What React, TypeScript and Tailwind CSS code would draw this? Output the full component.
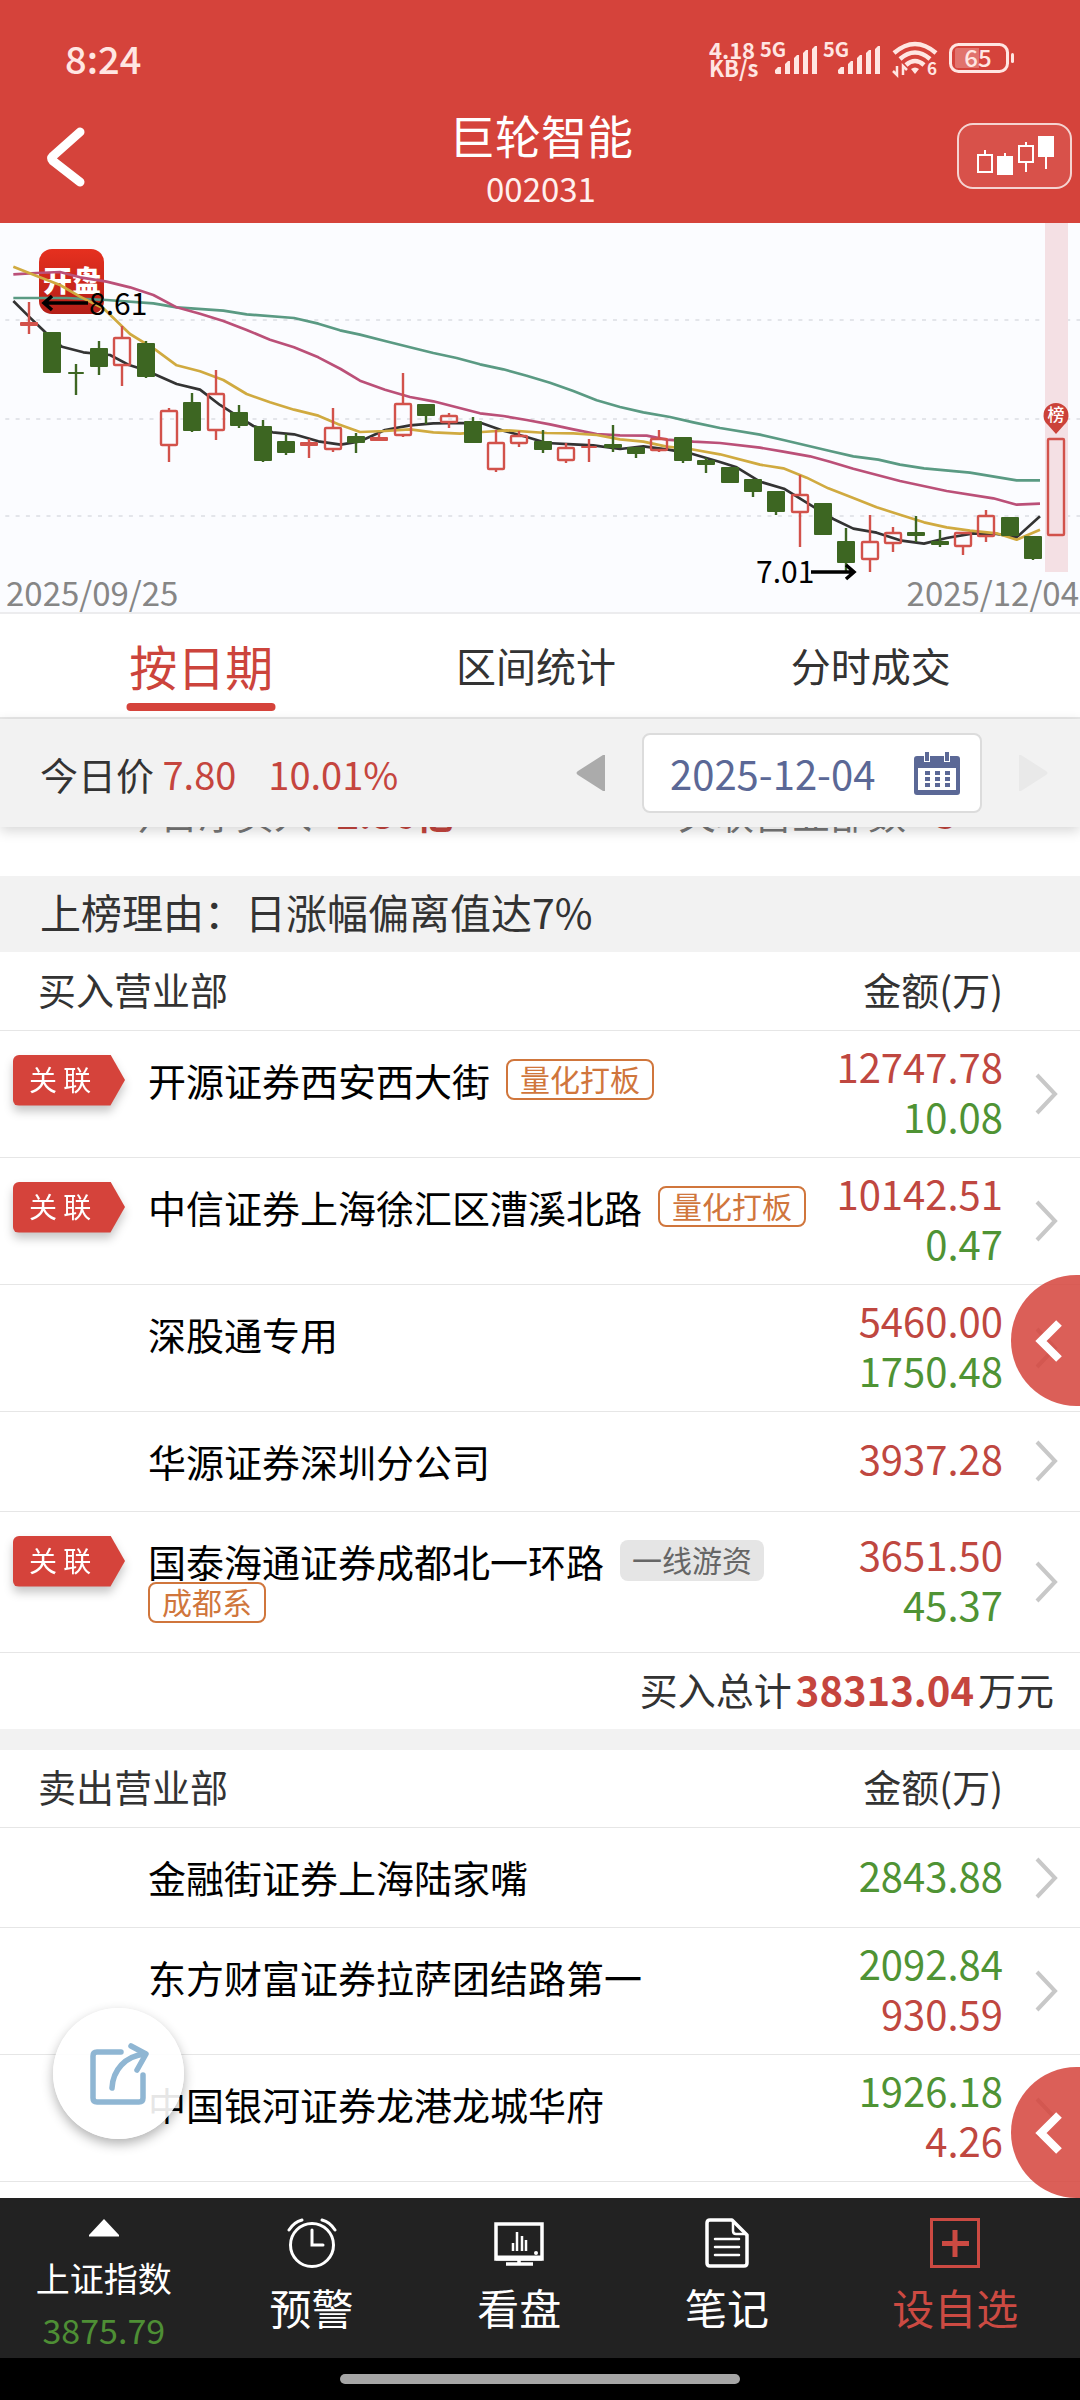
import type { ReactNode } from "react";

type Candle = {
  up: boolean;
  high: number;
  top: number;
  bottom: number;
  low: number;
};

type Tag = { label: string; tone: "orange" | "gray" };

type Seat = {
  name: string;
  linked?: boolean;
  tags?: Tag[];
  amount: string;
  counter?: string;
};

const c = (
  up: boolean,
  high: number,
  top: number,
  bottom: number,
  low: number
): Candle => ({ up, high, top, bottom, low });

const candles: Candle[] = [
  c(true, 79, 99, 103, 111),
  c(false, 109, 109, 150, 150),
  c(false, 141, 149, 151, 172),
  c(false, 118, 125, 144, 152),
  c(true, 103, 114, 143, 163),
  c(false, 118, 120, 154, 155),
  c(true, 185, 187, 223, 239),
  c(false, 170, 179, 208, 209),
  c(true, 147, 170, 208, 217),
  c(false, 182, 189, 203, 205),
  c(false, 197, 203, 238, 239),
  c(false, 211, 218, 230, 232),
  c(true, 216, 219, 223, 235),
  c(true, 185, 204, 227, 229),
  c(false, 210, 213, 220, 230),
  c(true, 210, 214, 218, 218),
  c(true, 150, 180, 213, 214),
  c(false, 181, 181, 193, 201),
  c(true, 190, 192, 200, 205),
  c(false, 194, 198, 220, 220),
  c(true, 207, 219, 247, 249),
  c(true, 208, 212, 221, 224),
  c(false, 207, 218, 227, 230),
  c(true, 220, 224, 238, 240),
  c(true, 216, 223, 225, 239),
  c(false, 202, 221, 225, 229),
  c(false, 224, 224, 231, 235),
  c(true, 207, 215, 228, 229),
  c(false, 214, 214, 238, 240),
  c(false, 235, 237, 242, 250),
  c(false, 244, 244, 260, 260),
  c(false, 256, 256, 269, 274),
  c(false, 268, 268, 289, 292),
  c(true, 252, 271, 290, 324),
  c(false, 280, 280, 312, 312),
  c(false, 305, 318, 340, 349),
  c(true, 292, 318, 337, 349),
  c(true, 304, 309, 321, 329),
  c(false, 293, 309, 313, 319),
  c(false, 307, 318, 322, 324),
  c(true, 309, 309, 324, 332),
  c(true, 287, 292, 314, 319),
  c(false, 294, 294, 313, 313),
  c(false, 313, 313, 336, 337),
  c(true, 215, 215, 313, 313),
];

// Moving averages, stored at three units per chart pixel
const averages = [
  {
    color: "#5a9a83",
    points:
      "40,234 200,234 320,240 460,250 530,262 670,272 740,283 882,294 955,311 1020,331 1080,344 1155,363 1230,382 1300,399 1370,414 1440,433 1510,448 1580,467 1650,488 1720,513 1790,541 1860,561 1930,577 2010,591 2080,607 2160,624 2280,644 2350,660 2490,693 2560,709 2635,719 2700,734 2772,745 2910,758 3050,781 3120,781",
  },
  {
    color: "#bb5078",
    points:
      "40,163 110,159 180,156 240,172 320,185 390,202 460,225 530,262 600,281 670,303 740,330 810,359 882,382 955,412 1022,447 1080,482 1155,509 1230,531 1300,544 1370,562 1440,580 1510,588 1580,600 1650,613 1720,628 1790,642 1860,646 1940,647 2000,659 2080,665 2160,669 2280,683 2350,695 2430,709 2490,725 2560,746 2700,783 2840,813 2980,835 3050,854 3120,851",
  },
  {
    color: "#333333",
    points:
      "40,243 87,290 136,337 186,380 250,397 297,402 330,405 385,434 435,450 530,492 600,509 660,555 715,590 760,618 818,637 882,643 955,664 1022,674 1080,664 1155,630 1230,616 1300,610 1380,609 1446,610 1510,632 1580,651 1640,669 1720,673 1780,676 1860,687 1930,679 2005,689 2070,700 2160,726 2210,742 2280,785 2352,806 2420,848 2500,897 2560,926 2630,938 2705,962 2772,971 2840,954 2920,940 2990,942 3050,952 3120,889",
  },
  {
    color: "#d0aa40",
    points:
      "40,140 110,168 180,195 240,230 310,265 390,342 465,388 530,436 600,454 670,480 740,522 810,547 882,569 955,587 1015,613 1080,636 1155,633 1230,628 1300,637 1380,641 1446,636 1520,631 1640,639 1720,640 1790,645 1860,658 1930,665 2000,680 2070,687 2160,703 2280,734 2350,745 2420,773 2485,805 2560,834 2630,862 2700,884 2772,907 2840,922 2910,932 2990,940 3050,959 3120,929",
  },
];

const quant: Tag = { label: "量化打板", tone: "orange" };

const buySeats: Seat[] = [
  { name: "开源证券西安西大街", linked: true, tags: [quant], amount: "12747.78", counter: "10.08" },
  { name: "中信证券上海徐汇区漕溪北路", linked: true, tags: [quant], amount: "10142.51", counter: "0.47" },
  { name: "深股通专用", amount: "5460.00", counter: "1750.48" },
  { name: "华源证券深圳分公司", amount: "3937.28" },
  {
    name: "国泰海通证券成都北一环路",
    linked: true,
    tags: [
      { label: "一线游资", tone: "gray" },
      { label: "成都系", tone: "orange" },
    ],
    amount: "3651.50",
    counter: "45.37",
  },
];

const sellSeats: Seat[] = [
  { name: "金融街证券上海陆家嘴", amount: "2843.88" },
  { name: "东方财富证券拉萨团结路第一", amount: "2092.84", counter: "930.59" },
  { name: "中国银河证券龙港龙城华府", amount: "1926.18", counter: "4.26" },
];

function StatusBar() {
  return (
    <div className="flex h-[115px] items-center justify-between px-[65px] text-[#ffe6e2]">
      <span className="text-[38px] leading-none font-medium">8:24</span>
      <div className="flex items-center">
        <div className="w-[51px] text-[22px] leading-[18px] font-bold">
          <div>4.18</div>
          <div>KB/s</div>
        </div>
        <SignalIcon />
        <SignalIcon />
        <WifiIcon />
        <BatteryIcon />
      </div>
    </div>
  );
}

function Header() {
  return (
    <header className="bg-[#d5433b] text-white">
      <StatusBar />
      <div className="grid h-[108px] grid-cols-[1fr_auto_1fr] items-start pr-2 pl-[42px]">
        <button type="button" aria-label="返回" className="mt-2 justify-self-start">
          <svg width="48" height="66" viewBox="0 0 48 66" fill="none" stroke="currentColor" strokeWidth="9" strokeLinecap="round" strokeLinejoin="round">
            <path d="M38 9 11 33c-2 2-2 3 0 5l27 21" />
          </svg>
        </button>
        <div className="pr-8 text-center">
          <h1 className="text-[46px] leading-[38px]">巨轮智能</h1>
          <p className="mt-4 text-[33px] leading-[38px] text-[#fff0ee]">002031</p>
        </div>
        <button
          type="button"
          aria-label="K线"
          className="mt-2 flex h-[66px] w-[115px] items-center justify-center justify-self-end rounded-2xl border-2 border-white/75 bg-white/8"
        >
          <CandlesIcon />
        </button>
      </div>
    </header>
  );
}

function CandleShape({ candle, index }: { candle: Candle; index: number }) {
  const x = Math.round(29 + index * 23.35);
  const color = candle.up ? "#d2524b" : "#3d6622";
  const height = candle.bottom - candle.top;
  const hollow = candle.up && height > 5;
  const half = height === 2 ? 8 : 9;

  return (
    <g stroke={color} strokeWidth="2.4">
      <line x1={x} x2={x} y1={candle.high} y2={candle.top} />
      <line x1={x} x2={x} y1={candle.bottom} y2={candle.low} />
      {hollow ? (
        <rect x={x - 8} y={candle.top + 1} width="16" height={height - 2} rx="1" fill="none" />
      ) : (
        <rect x={x - half} y={candle.top} width={half * 2} height={height} rx="1" fill={color} stroke="none" />
      )}
    </g>
  );
}

function KLineChart() {
  return (
    <div className="border-b-2 border-[#ececee] bg-[#fbfcff]">
      <svg viewBox="0 0 1080 389" className="block w-full" role="img" aria-label="K线图">
        <defs>
          <linearGradient id="logo" x1="0" y1="0" x2="0" y2="1">
            <stop offset="0" stopColor="#e6301f" />
            <stop offset="1" stopColor="#b41f18" />
          </linearGradient>
        </defs>
        {[97, 196, 293].map((y) => (
          <line key={y} x1="-5" x2="1080" y1={y} y2={y} stroke="#dcdde3" strokeWidth="1.5" strokeDasharray="4 6.3" />
        ))}
        <rect x="1045" y="0" width="23" height="349" fill="#f4e0e4" />
        <rect x="39" y="26" width="65" height="65" rx="13" fill="url(#logo)" />
        <text x="72" y="69" textAnchor="middle" fontSize="29" fontWeight="900" fill="#fff">开盘</text>
        <g transform="translate(0 -3) scale(0.33333)">
          {averages.map((line) => (
            <polyline key={line.color} points={line.points} fill="none" stroke={line.color} strokeWidth="8" strokeLinejoin="round" />
          ))}
        </g>
        {candles.map((candle, i) => (
          <CandleShape key={i} candle={candle} index={i} />
        ))}
        <path d="M1056 211 L1048 202 A12.5 12.5 0 1 1 1064 202 Z" fill="#cb4239" />
        <text x="1056" y="198" textAnchor="middle" fontSize="17" fontWeight="500" fill="#fff">榜</text>
        <g fill="none" stroke="#000" strokeWidth="3.5">
          <path d="M44 80H88M52 73 44 80 52 87" />
          <path d="M811 349H853M846 342 854 349 846 356" />
        </g>
        <text x="89" y="92" fontSize="30">8.61</text>
        <text x="756" y="360" fontSize="30">7.01</text>
        <text x="6" y="383" fontSize="33" fill="#868686">2025/09/25</text>
        <text x="1079" y="383" textAnchor="end" fontSize="33" fill="#868686">2025/12/04</text>
      </svg>
    </div>
  );
}

function Tabs() {
  return (
    <nav className="grid h-[105px] grid-cols-3 border-b-2 border-[#e8e8e8] bg-white pr-[42px] pb-[2px] pl-[34px] text-[40px] text-[#333]">
      <button type="button" className="relative text-[48px] text-[#cc443c]">
        按日期
        <span className="absolute bottom-[4px] left-1/2 h-2 w-[149px] -translate-x-1/2 rounded-full bg-[#d5433b]" />
      </button>
      <button type="button">区间统计</button>
      <button type="button">分时成交</button>
    </nav>
  );
}

function DateBar() {
  return (
    <div className="relative z-10 flex h-[108px] items-center bg-[#f2f2f2] pr-8 pl-10 text-[38px] text-[#333] shadow-[0_4px_12px_rgba(0,0,0,0.16)]">
      <p>
        今日价 <span className="mr-8 text-[#c5453e]">7.80</span>
        <span className="text-[#c5453e]">10.01%</span>
      </p>
      <button type="button" aria-label="前一天" className="mr-9 ml-auto">
        <svg width="30" height="36" viewBox="0 0 30 36" fill="#ababab">
          <path d="M29 0v36h-2L2 20q-3-2 0-4L27 0z" />
        </svg>
      </button>
      <label className="flex h-20 w-[340px] items-center justify-between rounded-lg border-2 border-[#dcdcdc] bg-white pr-5 pl-[26px]">
        <input
          type="text"
          aria-label="日期"
          readOnly
          value="2025-12-04"
          className="w-[220px] bg-transparent text-[40px] leading-none text-[#5b6896] outline-none"
        />
        <CalendarIcon />
      </label>
      <button type="button" aria-label="后一天" className="ml-9">
        <svg width="30" height="36" viewBox="0 0 30 36" fill="#e9e9e9">
          <path d="M1 0v36h2l25-16q3-2 0-4L3 0z" />
        </svg>
      </button>
    </div>
  );
}

// Only the feet of this row show under the date bar while the list is scrolled
function ScrolledSummary() {
  return (
    <div className="grid h-[49px] grid-cols-2 content-end overflow-hidden bg-white pb-11 text-[38px] leading-[38px] text-[#777]">
      <p className="pl-[122px]">
        今日净买入 <b className="ml-4 text-[#c5453e]">2.86亿</b>
      </p>
      <p className="pl-[138px]">
        关联营业部数 <b className="ml-5 text-[#c5453e]">3</b>
      </p>
    </div>
  );
}

function LinkedBadge() {
  return (
    <span className="ml-[13px] block w-28 drop-shadow-[0_6px_5px_rgba(0,0,0,0.22)]">
      <span className="block h-[51px] rounded-l-md bg-[#d5433b] pl-4 text-[28px] leading-[49px] whitespace-pre text-white [clip-path:polygon(0_0,87%_0,100%_50%,87%_100%,0_100%)]">
        关 联
      </span>
    </span>
  );
}

function SeatTag({ tag }: { tag: Tag }) {
  if (tag.tone === "gray") {
    return (
      <span className="h-[41px] rounded-lg bg-[#e5e5e5] px-3 text-[30px] leading-[39px] text-[#666]">
        {tag.label}
      </span>
    );
  }
  return (
    <span className="h-[41px] rounded-lg border-2 border-[#d0763c] px-3 text-[30px] leading-[35px] text-[#d0763c]">
      {tag.label}
    </span>
  );
}

function SeatTable({
  title,
  seats,
  side,
}: {
  title: string;
  seats: Seat[];
  side: "buy" | "sell";
}) {
  const main = side === "buy" ? "text-[#bf4740]" : "text-[#4f9334]";
  const counter = side === "buy" ? "text-[#4f9334]" : "text-[#bf4740]";

  return (
    <table className="w-full table-fixed border-collapse bg-white text-black">
      <colgroup>
        <col className="w-[148px]" />
        <col />
        <col className="w-[190px]" />
        <col className="w-[77px]" />
      </colgroup>
      <thead className="text-[38px] leading-[38px] text-[#333]">
        <tr className="h-[78px] border-b border-[#e6e6e6]">
          <th colSpan={2} className="pb-1 pl-[38px] text-left font-normal">{title}</th>
          <th className="pb-1 text-right font-normal">金额(万)</th>
          <th aria-label="详情" />
        </tr>
      </thead>
      <tbody>
        {seats.map((seat) => (
          <tr key={seat.name} className="border-b border-[#e6e6e6]">
            <td className="pt-6 align-top">{seat.linked && <LinkedBadge />}</td>
            <td className="pt-7 pb-[29px] align-top">
              <div className="flex flex-wrap items-center gap-x-4">
                <span className="text-[38px] leading-[42px]">{seat.name}</span>
                {seat.tags?.map((tag) => (
                  <SeatTag key={tag.label} tag={tag} />
                ))}
              </div>
            </td>
            <td className="pt-[10px] pb-4 text-right text-[40px] leading-[50px]">
              <div className={main}>{seat.amount}</div>
              {seat.counter && <div className={counter}>{seat.counter}</div>}
            </td>
            <td>
              <svg className="ml-8" width="24" height="42" viewBox="0 0 24 42" fill="none" stroke="#c8c8c8" strokeWidth="4">
                <path d="M2 2 20 21 2 40" />
              </svg>
            </td>
          </tr>
        ))}
      </tbody>
    </table>
  );
}

function SideHandle({ className }: { className: string }) {
  return (
    <button
      type="button"
      aria-label="展开"
      className={`absolute right-0 flex h-[131px] w-[69px] items-center rounded-l-full bg-[#d5433b]/85 pl-6 text-white ${className}`}
    >
      <svg width="28" height="42" viewBox="0 0 28 42" fill="none" stroke="currentColor" strokeWidth="8">
        <path d="M24 3 6 21 24 39" />
      </svg>
    </button>
  );
}

function NavItem({ icon, label, className = "" }: { icon: ReactNode; label: string; className?: string }) {
  return (
    <button type="button" className={`flex flex-col items-center pt-5 text-[42px] leading-[42px] ${className}`}>
      {icon}
      <span className="mt-[18px]">{label}</span>
    </button>
  );
}

function BottomNav() {
  return (
    <nav className="grid h-40 grid-cols-[5fr_5fr_5fr_5fr_6fr] bg-[#222] text-white">
      <button type="button" className="flex flex-col items-center pt-[21px] text-[34px] leading-[34px]">
        <svg width="30" height="18" viewBox="0 0 30 18" fill="currentColor">
          <path d="M15 0 30 16v1.500H0V16z" />
        </svg>
        <span className="mt-6">上证指数</span>
        <span className="mt-[18px] text-[#4e8f35]">3875.79</span>
      </button>
      <NavItem icon={<AlarmIcon />} label="预警" />
      <NavItem icon={<MonitorIcon />} label="看盘" />
      <NavItem icon={<NoteIcon />} label="笔记" />
      <NavItem icon={<AddIcon />} label="设自选" className="text-[#cc4a42]" />
    </nav>
  );
}

export default function App() {
  return (
    <div className="flex min-h-screen flex-col bg-white font-['Noto_Sans_CJK_SC',sans-serif]">
      <Header />
      <KLineChart />
      <Tabs />
      <DateBar />
      <main className="relative flex-1">
        <ScrolledSummary />
        <h2 className="flex h-[76px] items-center bg-[#f2f2f2] pb-1 pl-10 text-[41px] text-[#333]">
          上榜理由：日涨幅偏离值达7%
        </h2>
        <SeatTable title="买入营业部" seats={buySeats} side="buy" />
        <p className="flex h-[76px] items-center justify-end pr-[26px] pb-1 text-[38px] text-[#333]">
          买入总计
          <b className="mx-1 text-[40px] text-[#c5453e]">38313.04</b>
          万元
        </p>
        <div className="h-[21px] bg-[#f2f2f2]" />
        <SeatTable title="卖出营业部" seats={sellSeats} side="sell" />

        <button
          type="button"
          aria-label="分享"
          className="absolute bottom-[59px] left-[53px] flex h-[131px] w-[131px] items-center justify-center rounded-full bg-white/90 shadow-[0_5px_12px_rgba(0,0,0,0.3)]"
        >
          <ShareIcon />
        </button>
        <SideHandle className="bottom-[792px]" />
        <SideHandle className="bottom-0" />
      </main>
      <BottomNav />
      <div className="flex h-[42px] justify-center bg-black pt-4">
        <div className="h-[10px] w-[37%] rounded-full bg-[#a6a6a6]" />
      </div>
    </div>
  );
}

function SignalIcon() {
  return (
    <svg className="overflow-visible" width="63" height="36" viewBox="0 0 63 36" fill="currentColor">
      <text x="0" y="17" fontSize="20" fontWeight="700">5G</text>
      <path d="M15 33v-3l3-3h3v7h-5zM25 34V24l3-3h2v13zM34 34V18l3-3h2v19zM43 34V13l3-3h2v24zM52 34V9l3-3h2v28z" />
    </svg>
  );
}

function WifiIcon() {
  return (
    <svg className="ml-[6px] overflow-visible" width="46" height="36" viewBox="0 0 46 36" fill="none" stroke="currentColor">
      <path d="M2 13Q23-5 44 13" strokeWidth="4.500" />
      <path d="M8 19Q23 6 38 19" strokeWidth="4.500" />
      <path d="M14 25Q23 17 32 25" strokeWidth="4.500" />
      <path d="M19 29q4-3 8 0l-4 5z" fill="currentColor" stroke="none" />
      <path d="M5 26v9l-4-4M11 35v-9l4 4" strokeWidth="2.500" />
      <text x="35" y="35" fontSize="17" fontWeight="700" fill="currentColor" stroke="none">6</text>
    </svg>
  );
}

function BatteryIcon() {
  return (
    <svg className="ml-[11px] overflow-visible" width="66" height="30" viewBox="0 0 66 30" fill="none">
      <rect x="1.500" y="1.500" width="57" height="27" rx="8" stroke="currentColor" strokeWidth="3" />
      <path d="M8 5h22v20H8q-2 0-2-2V7q0-2 2-2z" fill="currentColor" opacity="0.3" />
      <rect x="62" y="10" width="3" height="10" rx="1.500" fill="currentColor" />
      <text x="29" y="24" textAnchor="middle" fontSize="24" fontWeight="500" fill="currentColor">65</text>
    </svg>
  );
}

function CandlesIcon() {
  return (
    <svg width="78" height="42" viewBox="0 0 78 42" fill="none" stroke="currentColor" strokeWidth="2">
      <path d="M9 15v4M2 20h14v17H2z" />
      <path d="M29 18v4" />
      <path d="M22 22h14v17H22z" fill="currentColor" />
      <path d="M50 7v4M43 11h14v16H43zM50 27v10" />
      <path d="M63 2h14v19H63z" fill="currentColor" />
      <path d="M70 21v13" />
    </svg>
  );
}

function CalendarIcon() {
  return (
    <svg width="46" height="44" viewBox="0 0 46 44" fill="#5b6896">
      <path d="M3 5h7v6h6V5h14v6h6V5h7q3 0 3 3v33q0 3-3 3H3q-3 0-3-3V8q0-3 3-3zM4 17v22h38V17z" fillRule="evenodd" />
      <path d="M11 1h4v9h-4zM31 1h4v9h-4z" />
      {[20, 26, 32].map((y) =>
        [11, 21, 31].map((x) => <rect key={`${x}-${y}`} x={x} y={y} width="5" height="4" />)
      )}
    </svg>
  );
}

function ShareIcon() {
  return (
    <svg width="60" height="64" viewBox="0 0 60 64" fill="none" stroke="#8fb6d3" strokeWidth="5.500" strokeLinecap="round" strokeLinejoin="round">
      <path d="M32 10H8q-4 0-4 4v42q0 4 4 4h42q4 0 4-4V33" />
      <path d="M23 46C24 28 36 14 56 12" />
      <path d="M42 4 57 12 48 28" />
    </svg>
  );
}

function AlarmIcon() {
  return (
    <svg width="50" height="50" viewBox="0 0 50 50" fill="none" stroke="currentColor" strokeWidth="3" strokeLinecap="round">
      <circle cx="25" cy="27" r="21.500" />
      <path d="M25 12v15h11M2 12Q7 4 15 2M48 12Q43 4 35 2" />
    </svg>
  );
}

function MonitorIcon() {
  return (
    <svg width="50" height="50" viewBox="0 0 50 50" fill="none" stroke="currentColor">
      <path d="M2 6h46v35H2z" strokeWidth="3.500" />
      <path d="M2 40h46" strokeWidth="5" />
      <path d="M12 46h27M25 42v4" strokeWidth="3.500" />
      <path d="M19 25v8M23 14v19M28 18v15M32 22v11" strokeWidth="2.500" />
      <circle cx="42" cy="35" r="2" fill="currentColor" stroke="none" />
    </svg>
  );
}

function NoteIcon() {
  return (
    <svg width="46" height="50" viewBox="0 0 46 50" fill="none" stroke="currentColor" strokeWidth="3.500" strokeLinejoin="round">
      <path d="M6 2h22l15 15v28q0 3-3 3H6q-3 0-3-3V5q0-3 3-3z" />
      <path d="M29 3v10q0 3 3 3h10" strokeWidth="2.500" />
      <path d="M11 21h24M11 29h24M11 37h24" strokeWidth="2.500" strokeLinecap="round" />
    </svg>
  );
}

function AddIcon() {
  return (
    <svg width="50" height="50" viewBox="0 0 50 50" fill="none" stroke="currentColor">
      <path d="M1.500 1.500h47v47h-47z" strokeWidth="3" />
      <path d="M25 12v27M12 25.500h27" strokeWidth="5" />
    </svg>
  );
}
